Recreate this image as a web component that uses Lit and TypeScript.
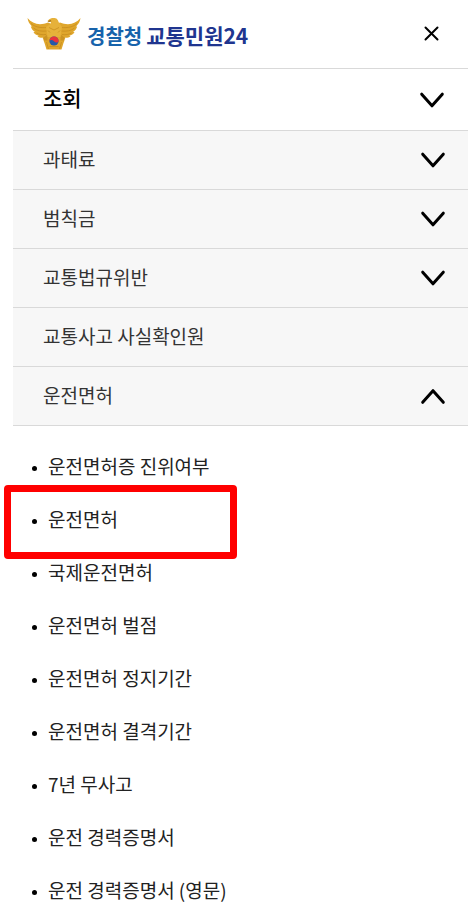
import { LitElement, html, css, svg } from "lit";
import { customElement, state } from "lit/decorators.js";

interface MenuEntry {
  label: string;
  expandable: boolean;
}

const ENTRIES: MenuEntry[] = [
  { label: "과태료", expandable: true },
  { label: "범칙금", expandable: true },
  { label: "교통법규위반", expandable: true },
  { label: "교통사고 사실확인원", expandable: false },
  { label: "운전면허", expandable: true },
];

const LICENSE_LINKS = [
  "운전면허증 진위여부",
  "운전면허",
  "국제운전면허",
  "운전면허 벌점",
  "운전면허 정지기간",
  "운전면허 결격기간",
  "7년 무사고",
  "운전 경력증명서",
  "운전 경력증명서 (영문)",
];

const chevron = (up: boolean) => html`
  <svg class="chevron" viewBox="0 0 26 18" aria-hidden="true">
    <path d=${up ? "M2.7 15.3 L13 3.7 L23.3 15.3" : "M2.7 3.2 L13 14.8 L23.3 3.2"} />
  </svg>
`;

const wing = svg`
  <path fill="#dfa62c" d="M0.5 2 C4 6 8 8 13 8.2 C16 8.2 18 7.5 21 6.5 L27 9 L27 25 L17 25
    L15.5 21.5 C13 22 11.5 21.5 10.5 20 L12 19.5 C9.5 19.5 7.5 18 6.500 16 L8 15.8 C5.5 14.5 4.500 12.8 3.8 10.5 L5 10.5 C2.5 8 1 5.500 0.5 2 Z" />
  <path fill="none" stroke="#c48a1d" stroke-width="0.7" d="M4 7.5 C8 11 13 12 20 11.5 M6.5 12 C10 15 14 15.5 20 15 M9.5 17 C12.5 18.5 15 19 19 18.500" />
  <path fill="#b8801b" d="M16.5 21.5 L20.5 18.5 L20.5 25.500 L17 25 Z" opacity="0.5" />
`;

const eagle = html`
  <svg class="emblem" viewBox="0 0 54 34" aria-hidden="true">
    <g>${wing}</g>
    <g transform="translate(54 0) scale(-1 1)">${wing}</g>
    <path fill="#dfa62c" d="M16.5 24.5 L37.5 24.5 L36.5 27 L34.5 33.5 L19.5 33.5 L17.5 27 Z" />
    <path fill="#e6b13a" d="M20.5 5 L22 3.5 C23 2.3 26 1.6 28.500 2.3 C31 3 31 5.500 32.500 7.500 L35 11 L33.500 21 L20.500 21 L19 11 L23.500 8 L24 6 Z" />
    <path fill="#a87516" d="M20.500 5.200 L23.500 4 L24.500 5.300 L22 6 Z" />
    <path fill="none" stroke="#c48a1d" stroke-width="0.7" d="M22 11.500 L27 14 L32 11.500 M21 14.500 L23 16.500 M33 14.500 L31 16.500 M19.500 26 L21.500 33 M34.500 26 L32.500 33 M22.500 30.500 L31.500 30.500" />
    <circle cx="27" cy="25" r="4.6" fill="#2459a8" />
    <path fill="#e8323c" d="M22.4 25 A4.6 4.6 0 0 1 31.6 25 C31 27 28.5 27 27 25.3 C25.5 23.7 23.5 23.700 22.4 25 Z" />
  </svg>
`;

@customElement("app-root")
export class AppRoot extends LitElement {
  @state() private openLabel = "운전면허";

  static styles = css`
    :host {
      display: block;
      background: #fff;
      color: #222;
      font-family: "Noto Sans CJK KR", sans-serif;
      font-size: 19px;
      line-height: 28px;
    }
    * {
      box-sizing: border-box;
    }
    .menu {
      padding-left: 13px;
    }
    .header {
      display: flex;
      align-items: center;
      justify-content: space-between;
      height: 69px;
      padding: 0 24px 2px 14px;
      border-bottom: 1px solid #d9d9d9;
    }
    .brand {
      display: flex;
      align-items: center;
      gap: 6px;
      color: #20358f;
      text-decoration: none;
      font-size: 21px;
      font-weight: 700;
    }
    .emblem {
      width: 54px;
      height: 34px;
    }
    .name {
      display: flex;
      align-items: baseline;
      gap: 4px;
      padding-top: 4px;
    }
    .agency {
      color: #1763ab;
      font-size: 20px;
    }
    button {
      margin: 0;
      border: 0;
      background: none;
      color: inherit;
      font: inherit;
      text-align: left;
      cursor: pointer;
    }
    .close {
      display: flex;
      padding: 4px;
    }
    .close svg {
      width: 17px;
      height: 17px;
    }
    .close path,
    .chevron path {
      fill: none;
      stroke: #000;
      stroke-linecap: round;
      stroke-linejoin: round;
    }
    .close path {
      stroke-width: 2;
    }
    .chevron {
      flex: none;
      width: 26px;
      height: 18px;
    }
    .chevron path {
      stroke-width: 3;
    }
    h2 {
      margin: 0;
      font: inherit;
    }
    .row {
      display: flex;
      align-items: center;
      justify-content: space-between;
      width: 100%;
      height: 59px;
      padding: 0 22px 0 30px;
      border-bottom: 1px solid #d9d9d9;
      background: #f7f7f7;
      color: #333;
    }
    .label {
      padding-bottom: 2px;
    }
    .title {
      height: 62px;
      padding-right: 23px;
      background: #fff;
      color: #000;
      font-size: 21px;
      font-weight: 500;
    }
    .title .label {
      padding-bottom: 6px;
    }
    ul {
      margin: 0;
      padding: 13px 0 0 35px;
      list-style: none;
    }
    ul.entries {
      padding: 0;
    }
    .link {
      position: relative;
      display: flex;
      align-items: center;
      height: 53px;
    }
    .link::before {
      content: "";
      position: absolute;
      left: -16px;
      top: 27px;
      width: 5px;
      height: 5px;
      border-radius: 50%;
      background: #000;
    }
    .link a {
      color: inherit;
      text-decoration: none;
    }
    .marker {
      position: absolute;
      left: -44px;
      top: -7px;
      width: 233px;
      height: 74px;
      border: 7px solid #f00;
      border-radius: 4px;
      pointer-events: none;
    }
  `;

  private toggle(entry: MenuEntry) {
    if (entry.expandable) {
      this.openLabel = this.openLabel === entry.label ? "" : entry.label;
    }
  }

  private renderLinks() {
    return html`
      <ul>
        ${LICENSE_LINKS.map(
          (label) => html`
            <li class="link">
              <a href="#">${label}</a>
              ${label === "운전면허" ? html`<span class="marker"></span>` : ""}
            </li>
          `
        )}
      </ul>
    `;
  }

  private renderEntry(entry: MenuEntry) {
    const label = html`<span class="label">${entry.label}</span>`;
    if (!entry.expandable) {
      return html`<li><button class="row">${label}</button></li>`;
    }
    const open = this.openLabel === entry.label;
    return html`
      <li>
        <button class="row" aria-expanded=${open} @click=${() => this.toggle(entry)}>
          ${label}${chevron(open)}
        </button>
        ${open && entry.label === "운전면허" ? this.renderLinks() : ""}
      </li>
    `;
  }

  render() {
    return html`
      <nav class="menu">
        <header class="header">
          <a class="brand" href="#">
            ${eagle}
            <span class="name"><span class="agency">경찰청</span><span>교통민원24</span></span>
          </a>
          <button class="close" aria-label="닫기">
            <svg viewBox="0 0 17 17" aria-hidden="true">
              <path d="M2.5 2.5 L14.5 14.5 M14.5 2.5 L2.5 14.5" />
            </svg>
          </button>
        </header>
        <h2>
          <button class="row title" aria-expanded="true"><span class="label">조회</span>${chevron(false)}</button>
        </h2>
        <ul class="entries">
          ${ENTRIES.map((entry) => this.renderEntry(entry))}
        </ul>
      </nav>
    `;
  }
}
